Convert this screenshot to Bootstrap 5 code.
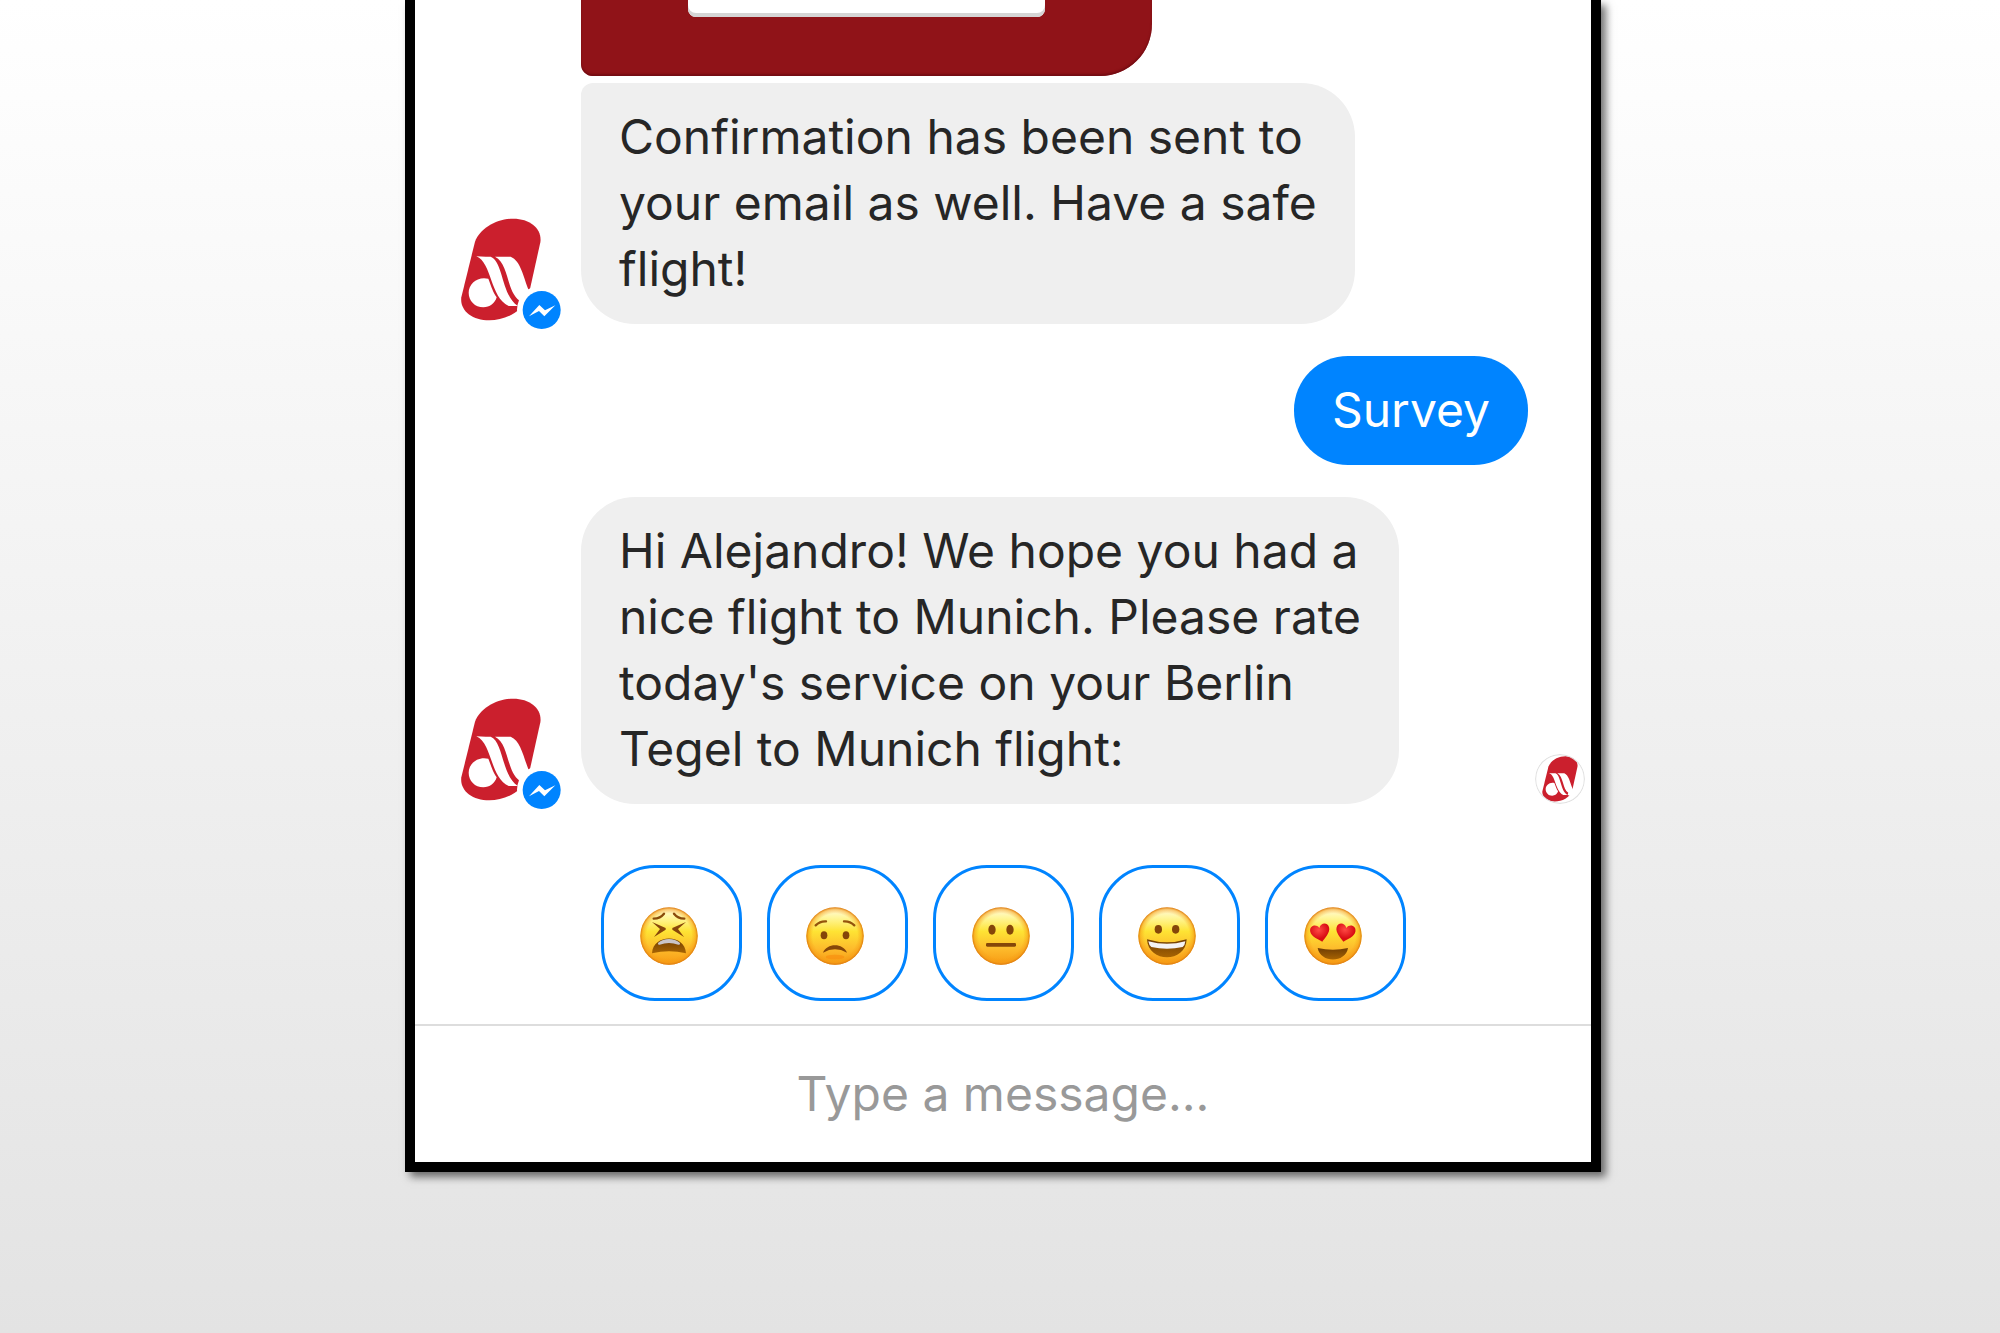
<!DOCTYPE html>
<html lang="en">
<head>
<meta charset="utf-8">
<meta name="viewport" content="width=device-width, initial-scale=1">
<title>Chat</title>
<link href="https://cdn.jsdelivr.net/npm/bootstrap@5.3.0/dist/css/bootstrap.min.css" rel="stylesheet">
<style>
  body {
    min-height: 100vh;
    background: linear-gradient(#ffffff, #e3e3e3) no-repeat;
    font-family: Inter, "Liberation Sans", sans-serif;
    font-size: 48px;
    line-height: 66px;
    color: #262626;
  }
  .stage { padding-left: 6px; }
  .phone {
    max-width: 1196px;
    border: 10px solid #000;
    border-top: 0;
    box-shadow: 5px 5px 8px rgba(0, 0, 0, .55);
  }
  .thread { gap: 32px; padding-bottom: 61px; }
  .avatar-col { flex: 0 0 166px; padding-left: 45px; }
  .avatar-pic { width: 104px; height: 110px; overflow: visible; }
  .stack { gap: 7px; }
  .ticket {
    width: 571px;
    height: 76px;
    padding: 0 107px 59px;
    background: #901318;
    border-radius: 0 0 52px 12px;
    box-shadow: inset 0 -2px 2px #740c12;
  }
  .ticket-slot {
    background: #fff;
    border-radius: 0 0 8px 8px;
    box-shadow: inset 0 -4px 0 #d5d5d5;
  }
  .bubble {
    padding: 21px 38px 22px;
    border-radius: 54px;
    background: #efefef;
  }
  .bubble-joined { border-top-left-radius: 12px; }
  .bubble-own { background: #0084ff; color: #fff; margin-right: 63px; }
  .seen-by { width: 50px; height: 50px; margin-right: 6px; }
  .replies { gap: 25px; padding-bottom: 23px; }
  .reply {
    width: 141px;
    height: 136px;
    border: 3px solid #0084ff;
    border-radius: 54px;
    padding: 6px 4px 0 0;
  }
  .reply svg { width: 58px; height: 58px; }
  .composer { border-top: 2px solid #ddd; }
  .composer input {
    height: 136px;
    padding-bottom: 8px;
    font-size: 48px;
    line-height: 66px;
  }
  .composer input::placeholder { color: #999; opacity: 1; }
</style>
<script src="https://cdn.jsdelivr.net/npm/bootstrap@5.3.0/dist/js/bootstrap.bundle.min.js"></script>
</head>
<body>
<svg width="0" height="0" class="position-absolute" aria-hidden="true">
  <defs>
    <linearGradient id="skin" x1="0" y1="0" x2="0" y2="1">
      <stop offset="0" stop-color="#fffbe6"/>
      <stop offset=".18" stop-color="#fff69a"/>
      <stop offset=".42" stop-color="#fee334"/>
      <stop offset=".72" stop-color="#fdbb2c"/>
      <stop offset="1" stop-color="#f79a12"/>
    </linearGradient>
    <radialGradient id="rim">
      <stop offset=".78" stop-color="#f59a14" stop-opacity="0"/>
      <stop offset=".92" stop-color="#f59a14" stop-opacity=".5"/>
      <stop offset="1" stop-color="#dc7a10"/>
    </radialGradient>
    <radialGradient id="heart" cx=".45" cy=".3">
      <stop offset="0" stop-color="#ff4a44"/>
      <stop offset="1" stop-color="#d90d14"/>
    </radialGradient>
    <linearGradient id="mouth" x1="0" y1="0" x2="0" y2="1">
      <stop offset="0" stop-color="#6f3d04"/>
      <stop offset="1" stop-color="#a86402"/>
    </linearGradient>
    <g id="face"><circle r="86" fill="url(#skin)"/><circle r="86" fill="url(#rim)"/></g>
    <path id="love" fill="url(#heart)" d="M0,28 C-10,18 -29,6 -29,-9 C-29,-27 -7,-30 0,-14 C7,-30 29,-27 29,-9 C29,6 10,18 0,28Z"/>
    <g id="airline">
      <path fill="#cb1f2d" d="M105,125 C120,85 170,56 220,56 C272,56 307,88 301,127 L266,285 C252,335 195,361 148,361 C95,361 59,330 64,292Z"/>
      <g fill="#fff">
        <path d="M109,169 Q130,171 152,170 C190,184 184,284 233,318 L206,318 C150,292 156,188 109,169Z"/>
        <path d="M165,170 H212 C242,182 250,230 266,270 L300,340 L234,318 L239,302 C199,275 207,190 165,170Z"/>
        <path d="M145,236 C155,262 158,274 170,292 C165,310 149,322 130,322 C105,322 86,302 86,278 C86,251 113,228 145,236Z"/>
      </g>
    </g>
    <g id="airline-messenger">
      <use href="#airline"/>
      <circle cx="305" cy="330" r="74" fill="#fff"/>
      <circle cx="305" cy="330" r="57" fill="#0084ff"/>
      <path fill="#fff" d="M267,349 L298,315 L315,331 L346,316 L313,349 L297,333Z"/>
    </g>
  </defs>
</svg>

<div class="stage">
  <main class="phone bg-white mx-auto">
    <section class="thread d-flex flex-column" aria-label="Conversation">
      <div class="d-flex align-items-end">
        <div class="avatar-col d-flex">
          <svg class="avatar-pic" viewBox="60 42 312 330" role="img" aria-label="Airline"><use href="#airline-messenger"/></svg>
        </div>
        <div class="stack d-flex flex-column align-items-start">
          <div class="ticket"><div class="ticket-slot h-100"></div></div>
          <div class="bubble bubble-joined">Confirmation has been sent to<br>your email as well. Have a safe<br>flight!</div>
        </div>
      </div>
      <div class="d-flex justify-content-end">
        <div class="bubble bubble-own">Survey</div>
      </div>
      <div class="d-flex align-items-end">
        <div class="avatar-col d-flex">
          <svg class="avatar-pic" viewBox="60 42 312 330" role="img" aria-label="Airline"><use href="#airline-messenger"/></svg>
        </div>
        <div class="bubble">Hi Alejandro! We hope you had a<br>nice flight to Munich. Please rate<br>today's service on your Berlin<br>Tegel to Munich flight:</div>
        <svg class="seen-by rounded-circle ms-auto flex-shrink-0" viewBox="14 40 338 338" role="img" aria-label="Seen">
          <use href="#airline"/><circle cx="183" cy="209" r="165" fill="none" stroke="#e2e2e2" stroke-width="8"/>
        </svg>
      </div>
    </section>

    <section class="replies d-flex justify-content-center" aria-label="Quick replies">
      <button type="button" class="reply bg-white d-flex align-items-center justify-content-center" aria-label="Terrible">
        <svg viewBox="-87 -87 174 174"><use href="#face"/>
          <g fill="none" stroke="#8a4b0a" stroke-width="7" stroke-linecap="round"><path d="M-46,-52 Q-26,-53 -15,-67"/><path d="M46,-52 Q26,-53 15,-67"/></g>
          <g fill="#87460a"><path d="M-51,-42 L-10,-24 V-19 L-45,3 L-27,-21Z"/><path d="M51,-42 L10,-24 V-19 L45,3 L27,-21Z"/></g>
          <path fill="url(#mouth)" d="M-51,52 C-48,-7 48,-7 51,52 Q0,40 -51,52Z"/>
          <path fill="#c9c4c8" d="M-33,21 C-16,5 16,5 33,21 Q34,28 28,26 Q0,16 -28,26 Q-34,28 -33,21Z"/>
        </svg>
      </button>
      <button type="button" class="reply bg-white d-flex align-items-center justify-content-center" aria-label="Poor">
        <svg viewBox="-87 -87 174 174"><use href="#face"/>
          <g fill="none" stroke="#94540c" stroke-width="7" stroke-linecap="round"><path d="M-58,-32 Q-45,-45 -27,-44"/><path d="M58,-32 Q45,-45 27,-44"/></g>
          <g fill="#854609"><ellipse cx="-33" cy="-2" rx="10" ry="12"/><ellipse cx="33" cy="-2" rx="10" ry="12"/><path d="M-36,50 C-25,20 25,20 36,50 Q0,30 -36,50Z"/></g>
          <ellipse cy="63" rx="28" ry="7" fill="#f88c0e" opacity=".6"/>
        </svg>
      </button>
      <button type="button" class="reply bg-white d-flex align-items-center justify-content-center" aria-label="Neutral">
        <svg viewBox="-87 -87 174 174"><use href="#face"/>
          <g fill="#854609"><ellipse cx="-27" cy="-19" rx="11" ry="15"/><ellipse cx="27" cy="-19" rx="11" ry="15"/><rect x="-45" y="21" width="90" height="11" rx="4"/></g>
        </svg>
      </button>
      <button type="button" class="reply bg-white d-flex align-items-center justify-content-center" aria-label="Good">
        <svg viewBox="-87 -87 174 174"><use href="#face"/>
          <g fill="#854609"><ellipse cx="-26" cy="-20" rx="11" ry="13"/><ellipse cx="26" cy="-20" rx="11" ry="13"/></g>
          <path fill="url(#mouth)" d="M-60,10 Q0,28 59,10 C56,82 -56,82 -60,10Z"/>
          <path fill="#f4f2f4" d="M-56,16 Q0,31 55,16 Q54,28 47,33 Q0,44 -47,33 Q-54,28 -56,16Z"/>
        </svg>
      </button>
      <button type="button" class="reply bg-white d-flex align-items-center justify-content-center" aria-label="Excellent">
        <svg viewBox="-87 -87 174 174"><use href="#face"/>
          <use href="#love" transform="translate(-38 -10) rotate(-12)"/><use href="#love" transform="translate(37 -10) rotate(12)"/>
          <path fill="url(#mouth)" d="M-46,36 Q0,46 45,36 C38,82 -38,82 -46,36Z"/>
        </svg>
      </button>
    </section>

    <form class="composer">
      <input id="message" type="text" aria-label="Message" class="form-control border-0 rounded-0 text-center bg-white" placeholder="Type a message...">
    </form>
  </main>
</div>
</body>
</html>
